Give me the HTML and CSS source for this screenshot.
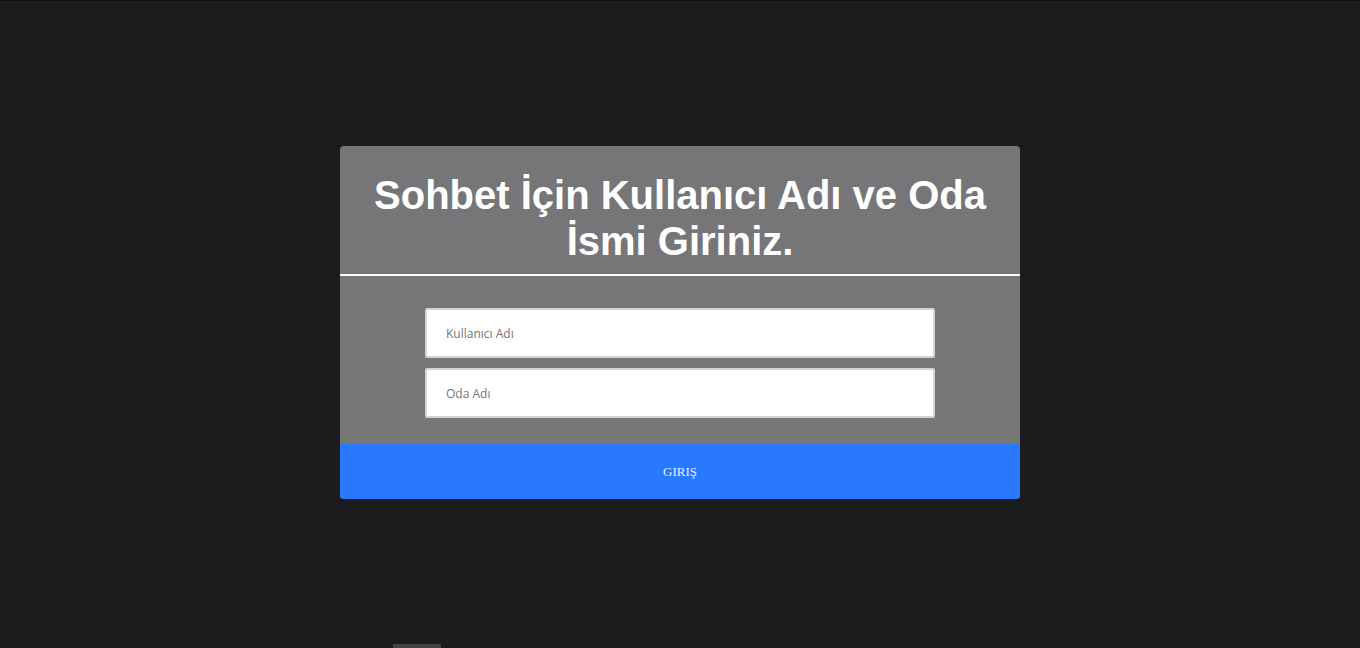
FILE: index.html
```html
<!DOCTYPE html>
<html lang="tr">
<head>
<meta charset="utf-8">
<title>Sohbet</title>
<link rel="stylesheet" href="styles.css">
</head>
<body>
<main class="page">
  <form class="card">
    <header class="card-head">
      <h1 class="title">Sohbet İçin Kullanıcı Adı ve Oda İsmi Giriniz.</h1>
    </header>
    <div class="card-body">
      <input class="field" type="text" placeholder="Kullanıcı Adı">
      <input class="field" type="text" placeholder="Oda Adı">
    </div>
    <button class="submit" type="button">GIRIŞ</button>
  </form>
</main>
<div class="scroll-thumb"></div>
</body>
</html>
```
FILE: styles.css
```css
html, body {
  margin: 0;
  padding: 0;
  height: 100%;
  overflow: hidden;
}
body {
  background: #1c1c1e;
  border-top: 1px solid #0e0e0f;
  box-sizing: border-box;
  font-family: "Liberation Sans", Arial, sans-serif;
}
.page {
  display: flex;
  justify-content: center;
  padding-top: 145px;
}
.card {
  width: 680px;
  background: #767577;
  border-radius: 4px;
  overflow: hidden;
  display: flex;
  flex-direction: column;
}
.card-head {
  border-bottom: 2px solid #ffffff;
  padding: 26px 30px 10px;
}
.title {
  margin: 0;
  color: #ffffff;
  font-size: 40px;
  line-height: 46px;
  font-weight: bold;
  text-align: center;
}
.card-body {
  display: flex;
  flex-direction: column;
  align-items: center;
  gap: 10px;
  padding: 32px 0 26px;
}
.field {
  width: 510px;
  height: 50px;
  box-sizing: border-box;
  border: 2px solid #d3d3d3;
  border-radius: 2px;
  background: #ffffff;
  padding: 0 19px;
  font-family: "Open Sans", "DejaVu Sans", sans-serif;
  font-size: 12px;
  color: #333;
  outline: none;
}
.field::placeholder {
  color: #757575;
}
.submit {
  height: 55px;
  border: 0;
  background: #2979ff;
  color: #e8eeff;
  font-family: "Liberation Serif", "DejaVu Serif", serif;
  font-size: 13px;
  cursor: pointer;
}
.scroll-thumb {
  position: fixed;
  left: 393px;
  bottom: 0;
  width: 48px;
  height: 4px;
  background: #444446;
}
```
